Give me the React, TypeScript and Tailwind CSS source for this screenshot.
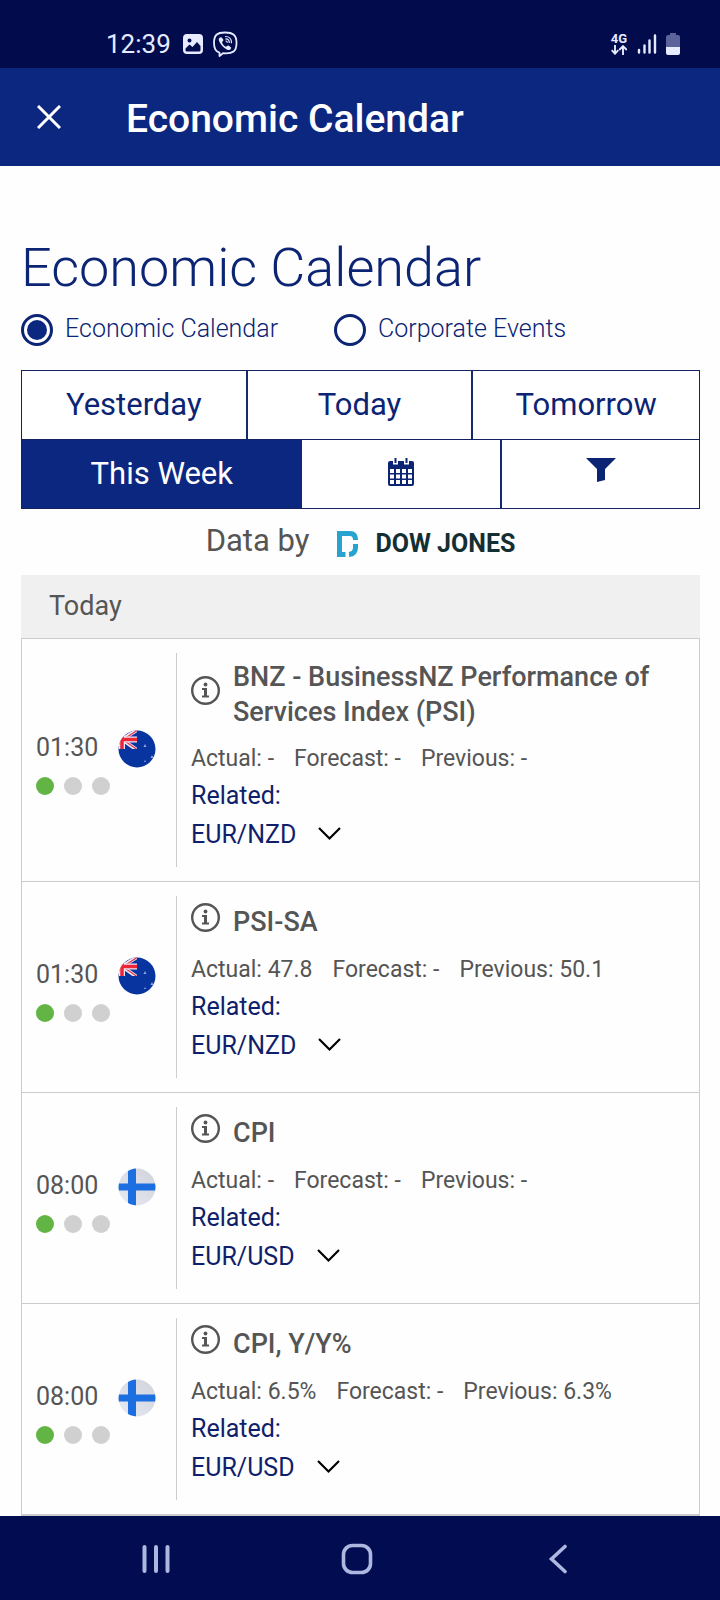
import { useState } from "react";
import clsx from "clsx";

type Country = "nz" | "fi";

interface EconomicEvent {
  title: string;
  time: string;
  country: Country;
  impact: number;
  actual: string;
  forecast: string;
  previous: string;
  pair: string;
}

const EVENTS: EconomicEvent[] = [
  {
    title: "BNZ - BusinessNZ Performance of Services Index (PSI)",
    time: "01:30",
    country: "nz",
    impact: 1,
    actual: "-",
    forecast: "-",
    previous: "-",
    pair: "EUR/NZD",
  },
  {
    title: "PSI-SA",
    time: "01:30",
    country: "nz",
    impact: 1,
    actual: "47.8",
    forecast: "-",
    previous: "50.1",
    pair: "EUR/NZD",
  },
  {
    title: "CPI",
    time: "08:00",
    country: "fi",
    impact: 1,
    actual: "-",
    forecast: "-",
    previous: "-",
    pair: "EUR/USD",
  },
  {
    title: "CPI, Y/Y%",
    time: "08:00",
    country: "fi",
    impact: 1,
    actual: "6.5%",
    forecast: "-",
    previous: "6.3%",
    pair: "EUR/USD",
  },
];

function StatusBar() {
  return (
    <div className="flex h-[68px] shrink-0 items-end justify-between bg-[#020c4d] pr-10 pb-2 pl-[106px] text-[#e6ebff]">
      <div className="flex items-center">
        <span className="text-[26px] leading-8">12:39</span>
        <svg className="ml-3 h-5 w-5" viewBox="0 0 20 20">
          <path
            fill="currentColor"
            fillRule="evenodd"
            d="M4 0h12a4 4 0 0 1 4 4v12a4 4 0 0 1-4 4H4a4 4 0 0 1-4-4V4a4 4 0 0 1 4-4ZM2.500 14.500v1.500a1.500 1.500 0 0 0 1.500 1.500h12a1.500 1.500 0 0 0 1.500-1.500v-4l-3.500-4-4.500 5-3-2.500ZM6.500 4.500a2 2 0 1 0 0 4 2 2 0 0 0 0-4Z"
          />
        </svg>
        <svg className="ml-[9px] h-[26px] w-[26px]" viewBox="0 0 26 26" fill="none" stroke="currentColor" strokeLinecap="round">
          <path
            strokeWidth="1.800"
            strokeLinejoin="round"
            d="M13 1.500c-8 0-11 2.500-11 10.500 0 5.500 1.500 8.500 5.500 9.700V25l3.500-2.800c10 .8 13.500-1.700 13.500-10.200 0-8-3.500-10.500-11.500-10.500Z"
          />
          <path
            fill="currentColor"
            stroke="none"
            d="M8.600 6.300c.7-.4 1.300 0 2.600 2.300.4.900.1 1.400-.7 2-.8.700-.3 1.700.8 3.200 1.200 1.500 2.600 2.500 3.500 1.500.7-.8 1.200-1.100 2-.6 2.200 1.400 2.700 1.900 2.200 2.700-1.300 2-2.400 2-4.200 1.100-3.800-2-6.700-5.400-8-9.200-.4-1.200.5-2.300 1.800-3Z"
          />
          <path strokeWidth="1.200" d="M13.500 5.500c3.600 0 6 2.500 6 6.200M13.800 7.800c2.200.1 3.400 1.400 3.500 3.700M14 10c.8 0 1.200.5 1.200 1.300" />
        </svg>
      </div>
      <div className="flex h-8 items-center">
        <div className="flex flex-col items-center">
          <span className="text-[13px] leading-3 font-bold">4G</span>
          <svg className="h-[10px] w-4" viewBox="0 0 16 10" fill="none" stroke="currentColor" strokeWidth="1.900">
            <path d="M4 0v8.500M.7 5.200 4 8.700l3.300-3.500M12 10V1.500M8.200 5 12 1.200 15.800 5" />
          </svg>
        </div>
        <svg className="ml-[10px] h-5 w-5" viewBox="0 0 20 20" stroke="currentColor" strokeWidth="2.400" strokeLinecap="round">
          <path d="M2 16v2.500M7.500 11.500v7M12.500 6.500v12M18 1.500v17" />
        </svg>
        <svg className="ml-[9px] h-[22px] w-[14px]" viewBox="0 0 14 22">
          <path fill="#5b639a" d="M4 0h6v2h2a2 2 0 0 1 2 2v10H0V4a2 2 0 0 1 2-2h2Z" />
          <path fill="currentColor" d="M0 14h14v6a2 2 0 0 1-2 2H2a2 2 0 0 1-2-2Z" />
        </svg>
      </div>
    </div>
  );
}

function AppBar() {
  return (
    <header className="flex h-[98px] shrink-0 items-center bg-[#0c2780] pl-[37px] text-white">
      <button aria-label="Close">
        <svg className="h-6 w-6" viewBox="0 0 24 24" stroke="currentColor" strokeWidth="3">
          <path d="M1 1 23 23M23 1 1 23" />
        </svg>
      </button>
      <p className="ml-[65px] pt-1 text-[39px] leading-[52px] font-medium">Economic Calendar</p>
    </header>
  );
}

function SourceRadio({ label, checked, onChange }: { label: string; checked: boolean; onChange: () => void }) {
  return (
    <label className="flex items-center gap-3">
      <input
        type="radio"
        name="source"
        checked={checked}
        onChange={onChange}
        className="h-8 w-8 appearance-none rounded-full border-3 border-[#0c2474] bg-white checked:bg-[#0c2780] checked:bg-clip-content checked:p-[3px]"
      />
      <span className="pb-[2px] text-[25px] leading-7 font-light">{label}</span>
    </label>
  );
}

function CalendarGridIcon() {
  return (
    <svg className="h-7 w-[26px]" viewBox="0 0 26 28">
      <path
        fill="currentColor"
        fillRule="evenodd"
        d="M2 3h3v3.500h5V3h6v3.500h5V3h3a2 2 0 0 1 2 2v21a2 2 0 0 1-2 2H2a2 2 0 0 1-2-2V5a2 2 0 0 1 2-2ZM2 11v4h4v-4ZM8 11v4h4v-4ZM14 11v4h4v-4ZM20 11v4h4v-4ZM2 16.500v4h4v-4ZM8 16.500v4h4v-4ZM14 16.500v4h4v-4ZM20 16.500v4h4v-4ZM2 22v4h4v-4ZM8 22v4h4v-4ZM14 22v4h4v-4ZM20 22v4h4v-4Z"
      />
      <path fill="currentColor" d="M6.500 0h2v5h-2ZM17.500 0h2v5h-2Z" />
    </svg>
  );
}

function FunnelIcon() {
  return (
    <svg className="h-6 w-[30px]" viewBox="0 0 30 24">
      <path fill="currentColor" d="M0 0h30L19 11v11l-8 2V11Z" />
    </svg>
  );
}

function RangePicker() {
  const [range, setRange] = useState("This Week");
  const cell = (name: string) =>
    clsx(
      "flex h-[68px] items-center justify-center",
      range === name ? "bg-[#0c2780] text-white" : "bg-white",
    );

  return (
    <div className="mt-6 border border-[#14235f] text-[31px] leading-9">
      <div className="grid grid-cols-3 divide-x-2 divide-[#14296f] border-b border-[#14235f]">
        {["Yesterday", "Today", "Tomorrow"].map((name) => (
          <button key={name} className={cell(name)} onClick={() => setRange(name)}>
            {name}
          </button>
        ))}
      </div>
      <div className="grid grid-cols-[280fr_199fr_199fr]">
        <button className={cell("This Week")} onClick={() => setRange("This Week")}>
          This Week
        </button>
        <button className={clsx(cell("Date"), "pb-1")} onClick={() => setRange("Date")} aria-label="Pick a date">
          <CalendarGridIcon />
        </button>
        <button
          className={clsx(cell("Filter"), "border-l-2 border-[#14296f] pb-2")}
          onClick={() => setRange("Filter")}
          aria-label="Filter"
        >
          <FunnelIcon />
        </button>
      </div>
    </div>
  );
}

function DataProvider() {
  return (
    <div className="flex h-[66px] items-center justify-center pb-[2px]">
      <span className="text-[31px] leading-9 text-[#555]">Data by</span>
      <div className="ml-7 flex items-center gap-4 pt-[6px]">
        <svg className="h-[26px] w-[22px]" viewBox="0 0 22 26" fill="none" stroke="#27a3cf" strokeWidth="5">
          <path d="M8.500 23.500H2.500V2.500H13Q18.500 2.500 18.500 9" />
          <path d="M18.500 13v3.500q0 6.500-6.500 7" />
        </svg>
        <span className="text-[25px] leading-8 font-bold text-[#142f33]">DOW JONES</span>
      </div>
    </div>
  );
}

function Flag({ country }: { country: Country }) {
  if (country === "fi") {
    return (
      <svg className="h-[38px] w-[38px]" viewBox="0 0 38 38">
        <defs>
          <linearGradient id="fi-base" x1="1" y1="0" x2="0" y2="1">
            <stop offset="0" stopColor="#cfd2da" />
            <stop offset="1" stopColor="#e9ebf5" />
          </linearGradient>
          <clipPath id="fi-clip">
            <circle cx="19" cy="19" r="18.500" />
          </clipPath>
        </defs>
        <g clipPath="url(#fi-clip)">
          <path fill="url(#fi-base)" d="M0 0h38v38H0Z" />
          <path fill="#1c6fe0" d="M10 0h8v15.500h20v7H18V38h-8V22.500H0v-7h10Z" />
        </g>
      </svg>
    );
  }
  return (
    <svg className="h-[38px] w-[38px]" viewBox="0 0 38 38">
      <defs>
        <clipPath id="nz-clip">
          <circle cx="19" cy="19" r="18.500" />
        </clipPath>
        <clipPath id="nz-canton">
          <path d="M0 0h19v19H0Z" />
        </clipPath>
      </defs>
      <g clipPath="url(#nz-clip)">
        <path fill="#0834a0" d="M0 0h38v38H0Z" />
        <g clipPath="url(#nz-canton)">
          <path stroke="#f0e6f4" strokeWidth="3.600" d="M4 9.500 19 0M4 9.500 19 20" />
          <path stroke="#e2364a" strokeWidth="1.200" d="M6 9 19 .5M6 10.500l13 9" />
          <path stroke="#f0e6f4" strokeWidth="6" d="M4 0v19M0 9.500h19" />
          <path stroke="#ee2536" strokeWidth="3.500" d="M4 0v19M0 9.500h19" />
        </g>
        <path fill="#8fa6e0" d="m27 14 1.500 3h-3ZM34 25l1.500 3h-3ZM27 30l1 2h-2Z" />
      </g>
    </svg>
  );
}

function InfoIcon() {
  return (
    <svg className="h-[30px] w-[30px]" viewBox="0 0 30 30">
      <circle cx="14.500" cy="14.500" r="13.300" fill="none" stroke="currentColor" strokeWidth="2.400" />
      <circle cx="14.500" cy="8.500" r="1.900" fill="currentColor" />
      <path fill="currentColor" d="M11 12h5v7.500h2v2h-7v-2h2v-5.500h-2Z" />
    </svg>
  );
}

function EventRow({ event }: { event: EconomicEvent }) {
  return (
    <li className="flex border-b border-[#ccc] py-[14px]">
      <div className="flex w-[154px] shrink-0 flex-col justify-center gap-[9px] pt-1 pl-[14px]">
        <div className="flex items-center gap-5">
          <time className="pb-[2px] text-[25px] leading-[34px]">{event.time}</time>
          <Flag country={event.country} />
        </div>
        <div className="flex gap-[10px]">
          {[1, 2, 3].map((level) => (
            <span
              key={level}
              className={clsx("h-[18px] w-[18px] rounded-full", level <= event.impact ? "bg-[#62b544]" : "bg-[#d0d0d0]")}
            />
          ))}
        </div>
      </div>
      <div className="flex-1 border-l border-[#ccc] pt-[7px] pr-4 pb-3 pl-[14px]">
        <div className="flex items-center gap-3">
          <button className="shrink-0 pb-2" aria-label="Event details">
            <InfoIcon />
          </button>
          <h3 className="text-[27px] leading-[35px] font-medium">{event.title}</h3>
        </div>
        <p className="mt-3 flex gap-5 text-[23px] leading-[34px]">
          <span>Actual: {event.actual}</span>
          <span>Forecast: {event.forecast}</span>
          <span>Previous: {event.previous}</span>
        </p>
        <p className="text-[25px] leading-[39px] text-[#101f6b]">Related:</p>
        <button className="flex items-center gap-[22px] text-[25px] leading-10 text-[#101f6b]">
          {event.pair}
          <svg className="h-4 w-[23px]" viewBox="0 0 23 16" fill="none" stroke="#000" strokeWidth="2.200">
            <path d="m1 1 10.500 10.500L22 1" />
          </svg>
        </button>
      </div>
    </li>
  );
}

function NavigationBar() {
  return (
    <nav className="grid h-[84px] shrink-0 grid-cols-3 items-center justify-items-center bg-[#020c50] pt-[2px] pr-[61px] pl-[55px] text-[#adb7df]">
      <button aria-label="Recent apps">
        <svg className="h-[30px] w-[30px]" viewBox="0 0 30 30" stroke="currentColor" strokeWidth="4" strokeLinecap="round">
          <path d="M3.500 3v24M15 3v24M26.500 3v24" />
        </svg>
      </button>
      <button aria-label="Home">
        <svg className="h-8 w-8" viewBox="0 0 32 32" fill="none" stroke="currentColor" strokeWidth="3.600">
          <rect x="2.500" y="2.500" width="27" height="27" rx="9" />
        </svg>
      </button>
      <button aria-label="Back">
        <svg className="h-[30px] w-5" viewBox="0 0 20 30" fill="none" stroke="currentColor" strokeWidth="3.600" strokeLinecap="round">
          <path d="M17 2.500 3.500 15 17 27.500" />
        </svg>
      </button>
    </nav>
  );
}

export default function App() {
  const [source, setSource] = useState("economic");

  return (
    <div className="flex h-screen flex-col overflow-hidden bg-[#fefefe] font-['Roboto',sans-serif]">
      <StatusBar />
      <AppBar />
      <main className="flex min-h-0 flex-1 flex-col overflow-hidden pt-[68px] pr-5 pl-[21px] text-[#0c2474]">
        <h1 className="text-[54px] leading-[68px] font-light">Economic Calendar</h1>
        <div className="mt-3 flex gap-14">
          <SourceRadio label="Economic Calendar" checked={source === "economic"} onChange={() => setSource("economic")} />
          <SourceRadio label="Corporate Events" checked={source === "corporate"} onChange={() => setSource("corporate")} />
        </div>
        <RangePicker />
        <DataProvider />
        <h2 className="bg-[#f0f0f0] pt-[13px] pb-[14px] pl-7 text-[27px] leading-9 text-[#555]">Today</h2>
        <ul className="grow border border-[#ccc] text-[#555]">
          {EVENTS.map((event) => (
            <EventRow key={event.title} event={event} />
          ))}
        </ul>
      </main>
      <NavigationBar />
    </div>
  );
}
